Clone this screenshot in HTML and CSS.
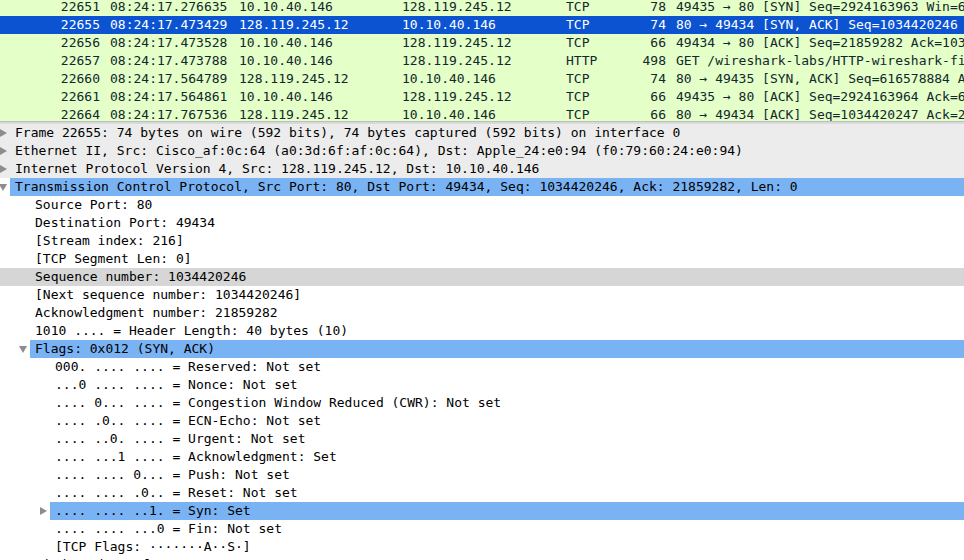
FILE: index.html
```html
<!DOCTYPE html>
<html>
<head>
<meta charset="utf-8">
<link rel="stylesheet" href="styles.css">
</head>
<body>
<div class="packets">
  <div class="prow"><span class="c-no">22651</span><span class="c-time">08:24:17.276635</span><span class="c-src">10.10.40.146</span><span class="c-dst">128.119.245.12</span><span class="c-proto">TCP</span><span class="c-len">78</span><span class="c-info">49435 → 80 [SYN] Seq=2924163963 Win=65535 Len=0 MSS=1460 WS=32</span></div>
  <div class="prow sel"><span class="c-no">22655</span><span class="c-time">08:24:17.473429</span><span class="c-src">128.119.245.12</span><span class="c-dst">10.10.40.146</span><span class="c-proto">TCP</span><span class="c-len">74</span><span class="c-info">80 → 49434 [SYN, ACK] Seq=1034420246 Ack=21859282 Win=28960 Len=0</span></div>
  <div class="prow"><span class="c-no">22656</span><span class="c-time">08:24:17.473528</span><span class="c-src">10.10.40.146</span><span class="c-dst">128.119.245.12</span><span class="c-proto">TCP</span><span class="c-len">66</span><span class="c-info">49434 → 80 [ACK] Seq=21859282 Ack=1034420247 Win=131744 Len=0</span></div>
  <div class="prow"><span class="c-no">22657</span><span class="c-time">08:24:17.473788</span><span class="c-src">10.10.40.146</span><span class="c-dst">128.119.245.12</span><span class="c-proto">HTTP</span><span class="c-len">498</span><span class="c-info">GET /wireshark-labs/HTTP-wireshark-file1.html HTTP/1.1</span></div>
  <div class="prow"><span class="c-no">22660</span><span class="c-time">08:24:17.564789</span><span class="c-src">128.119.245.12</span><span class="c-dst">10.10.40.146</span><span class="c-proto">TCP</span><span class="c-len">74</span><span class="c-info">80 → 49435 [SYN, ACK] Seq=616578884 Ack=2924163964 Win=28960 Len=0</span></div>
  <div class="prow"><span class="c-no">22661</span><span class="c-time">08:24:17.564861</span><span class="c-src">10.10.40.146</span><span class="c-dst">128.119.245.12</span><span class="c-proto">TCP</span><span class="c-len">66</span><span class="c-info">49435 → 80 [ACK] Seq=2924163964 Ack=616578885 Win=131744 Len=0</span></div>
  <div class="prow"><span class="c-no">22664</span><span class="c-time">08:24:17.767536</span><span class="c-src">128.119.245.12</span><span class="c-dst">10.10.40.146</span><span class="c-proto">TCP</span><span class="c-len">66</span><span class="c-info">80 → 49434 [ACK] Seq=1034420247 Ack=21859714 Win=30080 Len=0</span></div>
</div>
<div class="divider"></div>
<div class="details">
  <div class="drow top l0"><span class="gut"><svg class="arr" width="7" height="8" viewBox="0 0 7 8"><polygon points="0,0 7,4 0,8"/></svg></span><span class="lbl">Frame 22655: 74 bytes on wire (592 bits), 74 bytes captured (592 bits) on interface 0</span></div>
  <div class="drow top l0"><span class="gut"><svg class="arr" width="7" height="8" viewBox="0 0 7 8"><polygon points="0,0 7,4 0,8"/></svg></span><span class="lbl">Ethernet II, Src: Cisco_af:0c:64 (a0:3d:6f:af:0c:64), Dst: Apple_24:e0:94 (f0:79:60:24:e0:94)</span></div>
  <div class="drow top l0"><span class="gut"><svg class="arr" width="7" height="8" viewBox="0 0 7 8"><polygon points="0,0 7,4 0,8"/></svg></span><span class="lbl">Internet Protocol Version 4, Src: 128.119.245.12, Dst: 10.10.40.146</span></div>
  <div class="drow l0 hl"><span class="gut"><svg class="arr" width="8" height="7" viewBox="0 0 8 7"><polygon points="0,0 8,0 4,7"/></svg></span><span class="lbl">Transmission Control Protocol, Src Port: 80, Dst Port: 49434, Seq: 1034420246, Ack: 21859282, Len: 0</span></div>
  <div class="drow l1"><span class="gut"></span><span class="lbl">Source Port: 80</span></div>
  <div class="drow l1"><span class="gut"></span><span class="lbl">Destination Port: 49434</span></div>
  <div class="drow l1"><span class="gut"></span><span class="lbl">[Stream index: 216]</span></div>
  <div class="drow l1"><span class="gut"></span><span class="lbl">[TCP Segment Len: 0]</span></div>
  <div class="drow l1 mark"><span class="gut"></span><span class="lbl">Sequence number: 1034420246</span></div>
  <div class="drow l1"><span class="gut"></span><span class="lbl">[Next sequence number: 1034420246]</span></div>
  <div class="drow l1"><span class="gut"></span><span class="lbl">Acknowledgment number: 21859282</span></div>
  <div class="drow l1"><span class="gut"></span><span class="lbl">1010 .... = Header Length: 40 bytes (10)</span></div>
  <div class="drow l1 hl"><span class="gut"><svg class="arr" width="8" height="7" viewBox="0 0 8 7"><polygon points="0,0 8,0 4,7"/></svg></span><span class="lbl">Flags: 0x012 (SYN, ACK)</span></div>
  <div class="drow l2"><span class="gut"></span><span class="lbl">000. .... .... = Reserved: Not set</span></div>
  <div class="drow l2"><span class="gut"></span><span class="lbl">...0 .... .... = Nonce: Not set</span></div>
  <div class="drow l2"><span class="gut"></span><span class="lbl">.... 0... .... = Congestion Window Reduced (CWR): Not set</span></div>
  <div class="drow l2"><span class="gut"></span><span class="lbl">.... .0.. .... = ECN-Echo: Not set</span></div>
  <div class="drow l2"><span class="gut"></span><span class="lbl">.... ..0. .... = Urgent: Not set</span></div>
  <div class="drow l2"><span class="gut"></span><span class="lbl">.... ...1 .... = Acknowledgment: Set</span></div>
  <div class="drow l2"><span class="gut"></span><span class="lbl">.... .... 0... = Push: Not set</span></div>
  <div class="drow l2"><span class="gut"></span><span class="lbl">.... .... .0.. = Reset: Not set</span></div>
  <div class="drow l2 hl"><span class="gut"><svg class="arr" width="7" height="8" viewBox="0 0 7 8"><polygon points="0,0 7,4 0,8"/></svg></span><span class="lbl">.... .... ..1. = Syn: Set</span></div>
  <div class="drow l2"><span class="gut"></span><span class="lbl">.... .... ...0 = Fin: Not set</span></div>
  <div class="drow l2"><span class="gut"></span><span class="lbl">[TCP Flags: ·······A··S·]</span></div>
  <div class="drow l1"><span class="gut"></span><span class="lbl">Window size value: 28960</span></div>
</div>
</body>
</html>
```
FILE: styles.css
```css
html, body {
  margin: 0;
  padding: 0;
  background: #ffffff;
  width: 964px;
  height: 560px;
  overflow: hidden;
}
body {
  font-family: "DejaVu Sans Mono", "Liberation Mono", monospace;
  font-size: 13px;
  color: #000;
}
.packets {
  height: 121px;
  overflow: hidden;
  background: #e4ffc7;
}
.prow {
  display: grid;
  grid-template-columns: 100px 139px 163px 164px 50px 50px 1fr;
  height: 18px;
  line-height: 18px;
  white-space: nowrap;
  color: #12272e;
  background: #e4ffc7;
}
.prow:first-child {
  margin-top: -2px;
}
.prow.sel {
  background: #0b53d0;
  color: #ffffff;
}
.prow span { overflow: hidden; }
.c-no { text-align: right; }
.c-time { padding-left: 10px; }
.c-len { text-align: right; }
.c-info { padding-left: 10px; }
.divider {
  height: 1px;
  background: #bdbdbd;
  border-bottom: 2px solid #dadada;
}
.details {
  display: flex;
  flex-direction: column;
}
.drow {
  display: flex;
  height: 18px;
  line-height: 18px;
  white-space: nowrap;
}
.drow.top { background: #ececec; }
.drow.mark { background: #d6d6d6; }
.gut {
  flex: none;
  display: flex;
  align-items: center;
  justify-content: flex-end;
  padding-right: 3px;
  box-sizing: border-box;
}
.l0 .gut { width: 10px; }
.l1 .gut { width: 30px; }
.l2 .gut { width: 50px; }
.lbl {
  flex: 1;
  padding-left: 5px;
  overflow: hidden;
}
.drow.hl .lbl { background: #7ab3f4; }
.arr { fill: #8d8d8d; flex: none; }
```
